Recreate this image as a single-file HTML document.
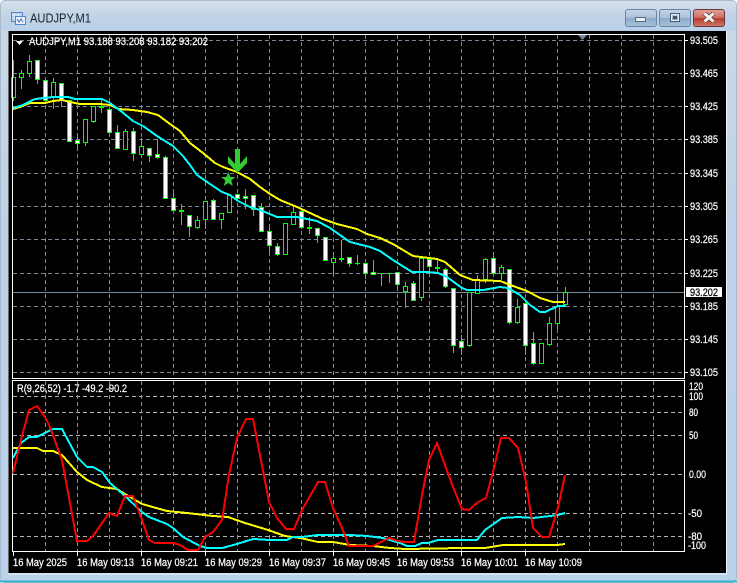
<!DOCTYPE html>
<html><head><meta charset="utf-8"><title>AUDJPY,M1</title>
<style>
html,body{margin:0;padding:0;background:#fff;overflow:hidden}
svg{display:block}
text{font-family:"Liberation Sans",sans-serif;font-size:11px;fill:#fff;stroke:#fff;stroke-width:.22px}
</style></head><body>
<svg width="737" height="583" viewBox="0 0 737 583" xmlns="http://www.w3.org/2000/svg">
<defs>
<linearGradient id="tb" x1="0" y1="0" x2="0" y2="1"><stop offset="0" stop-color="#d6e0ea"/><stop offset=".5" stop-color="#c2d3e5"/><stop offset="1" stop-color="#b9d1ea"/></linearGradient>
<linearGradient id="lf" x1="0" y1="0" x2="0" y2="1"><stop offset="0" stop-color="#ccd9e6"/><stop offset=".4" stop-color="#bcd2e8"/><stop offset="1" stop-color="#b9d1ea"/></linearGradient>
<linearGradient id="bt" x1="0" y1="0" x2="0" y2="1"><stop offset="0" stop-color="#c3d5e8"/><stop offset=".48" stop-color="#a9c1da"/><stop offset=".52" stop-color="#8caac8"/><stop offset="1" stop-color="#a8c4df"/></linearGradient>
<linearGradient id="cl" x1="0" y1="0" x2="0" y2="1"><stop offset="0" stop-color="#e0a198"/><stop offset=".48" stop-color="#cf6f62"/><stop offset=".52" stop-color="#b73a2b"/><stop offset="1" stop-color="#cf7a68"/></linearGradient>
</defs>
<rect width="737" height="583" fill="#fff"/>
<rect x="0" y="0" width="737" height="583" rx="5" fill="url(#lf)"/>
<rect x="0.5" y="0.5" width="736" height="582" rx="5" fill="none" stroke="#a9bccd"/>
<rect x="1" y="1" width="735" height="30" rx="4" fill="url(#tb)"/>
<path d="M0 581.500H737" stroke="#2fb4cc" stroke-width="2"/>

<!-- title icon -->
<g shape-rendering="crispEdges">
<rect x="11.500" y="12.500" width="11" height="9" fill="#bcd6f2" stroke="#4f86c6"/>
<rect x="15.500" y="16.500" width="10" height="8" fill="#e6f1fb" stroke="#4f86c6"/>
<path d="M13 15h2M17 15h2M14 18h1" stroke="#fff"/>
</g>
<path d="M17 19l2 3 2-3 2 3" fill="none" stroke="#3a6fb0"/>
<text x="30" y="22.500" textLength="61" lengthAdjust="spacingAndGlyphs" style="font-size:12.500px;fill:#16212e;stroke:none">AUDJPY,M1</text>

<!-- caption buttons -->
<rect x="625.500" y="9.500" width="31" height="17" rx="2.500" fill="url(#bt)" stroke="#6d84a0"/>
<rect x="659.500" y="9.500" width="31" height="17" rx="2.500" fill="url(#bt)" stroke="#6d84a0"/>
<rect x="693.500" y="9.500" width="31" height="17" rx="2.500" fill="url(#cl)" stroke="#6b3a40"/>
<rect x="635.500" y="17.500" width="10" height="4" fill="#e8eef5" stroke="#5a6b80" shape-rendering="crispEdges"/>
<rect x="670.500" y="13.500" width="9" height="8" fill="none" stroke="#4a5a70" shape-rendering="crispEdges"/>
<rect x="671.500" y="14.500" width="7" height="6" fill="none" stroke="#e8eef5" shape-rendering="crispEdges"/>
<rect x="673" y="16" width="4" height="3" fill="#3f4f63"/>
<path d="M704.500 13.500l9 8M713.500 13.500l-9 8" stroke="#5a2a28" stroke-width="4.400" fill="none"/>
<path d="M704.500 13.500l9 8M713.500 13.500l-9 8" stroke="#f4f2f0" stroke-width="3" fill="none"/>

<!-- client area -->
<rect x="8" y="31" width="718" height="542" fill="#000"/>
<path d="M8.500 31V573" stroke="#6a6a6a" shape-rendering="crispEdges"/>
<path d="M726.500 31V574H8" stroke="#f2f6fa" fill="none" shape-rendering="crispEdges"/>

<!-- main grid -->
<path shape-rendering="crispEdges" stroke="#778899" stroke-dasharray="4 3" fill="none" d="M13 40.500H684M13 73.500H684M13 106.500H684M13 139.500H684M13 173.500H684M13 206.500H684M13 239.500H684M13 273.500H684M13 306.500H684M13 339.500H684M13 372.500H684M45.500 35V378M77.500 35V378M109.500 35V378M141.500 35V378M173.500 35V378M205.500 35V378M237.500 35V378M269.500 35V378M301.500 35V378M333.500 35V378M365.500 35V378M397.500 35V378M429.500 35V378M461.500 35V378M493.500 35V378M525.500 35V378M557.500 35V378M589.500 35V378M621.500 35V378M653.500 35V378"/>
<path shape-rendering="crispEdges" stroke="#778899" fill="none" d="M13 292.500H684"/>

<!-- wicks -->
<path shape-rendering="crispEdges" stroke="#00ff00" fill="none" d="M13.500 60V101M21.500 70V89M29.500 55V77M37.500 60V84M45.500 80V100M53.500 78V109M61.500 83V107M69.500 100V141M77.500 134V151M85.500 119V146M93.500 106V123M101.500 100V113M109.500 105V133M117.500 125V148M125.500 129V150M133.500 128V161M141.500 138V157M149.500 148V162M157.500 139V159M165.500 156V198M173.500 193V211M181.500 204V225M189.500 215V237M197.500 216V229M205.500 201V229M213.500 199V219M221.500 213V229M229.500 195V213M245.500 189V209M253.500 195V216M261.500 203V232M269.500 227V252M277.500 243V256M293.500 206V225M301.500 209V229M309.500 217V234M317.500 228V243M325.500 237V260M333.500 256V276M341.500 240V262M349.500 257V267M357.500 255V265M365.500 263V279M373.500 260V274M381.500 273V286M389.500 273V283M397.500 272V291M405.500 282V308M413.500 281V301M421.500 258V301M429.500 258V272M437.500 260V273M445.500 268V288M453.500 288V353M461.500 335V355M469.500 292V347M477.500 275V293M485.500 258V283M493.500 256V274M501.500 265V280M509.500 269V324M517.500 299V324M525.500 303V355M533.500 332V365M549.500 317V346M557.500 298V330M565.500 287V307"/>
<!-- hollow bodies -->
<g shape-rendering="crispEdges" stroke="#00ff00" fill="#000">
<rect x="11.500" y="77.500" width="4" height="20"/><rect x="19.500" y="73.500" width="4" height="4"/><rect x="27.500" y="61.500" width="4" height="12"/><rect x="51.500" y="82.500" width="4" height="15"/><rect x="83.500" y="119.500" width="4" height="23"/><rect x="91.500" y="106.500" width="4" height="15"/><rect x="123.500" y="131.500" width="4" height="18"/><rect x="139.500" y="146.500" width="4" height="8"/><rect x="195.500" y="220.500" width="4" height="7"/><rect x="203.500" y="201.500" width="4" height="18"/><rect x="219.500" y="213.500" width="4" height="6"/><rect x="227.500" y="195.500" width="4" height="17"/><rect x="283.500" y="223.500" width="4" height="31"/><rect x="291.500" y="212.500" width="4" height="12"/><rect x="331.500" y="258.500" width="4" height="4"/><rect x="403.500" y="286.500" width="4" height="5"/><rect x="419.500" y="258.500" width="4" height="39"/><rect x="467.500" y="292.500" width="4" height="53"/><rect x="475.500" y="279.500" width="4" height="14"/><rect x="483.500" y="259.500" width="4" height="20"/><rect x="499.500" y="267.500" width="4" height="6"/><rect x="515.500" y="307.500" width="4" height="15"/><rect x="539.500" y="343.500" width="4" height="20"/><rect x="547.500" y="323.500" width="4" height="21"/><rect x="555.500" y="306.500" width="4" height="17"/><rect x="563.500" y="292.500" width="4" height="12"/>
</g>
<!-- white bodies -->
<g shape-rendering="crispEdges" stroke="#00ff00" fill="#fff">
<rect x="35.500" y="60.500" width="4" height="19"/><rect x="43.500" y="80.500" width="4" height="20"/><rect x="59.500" y="83.500" width="4" height="16"/><rect x="67.500" y="100.500" width="4" height="41"/><rect x="75.500" y="140.500" width="4" height="3"/><rect x="107.500" y="109.500" width="4" height="23"/><rect x="115.500" y="132.500" width="4" height="16"/><rect x="131.500" y="131.500" width="4" height="22"/><rect x="147.500" y="148.500" width="4" height="7"/><rect x="155.500" y="154.500" width="4" height="3"/><rect x="163.500" y="157.500" width="4" height="41"/><rect x="171.500" y="198.500" width="4" height="12"/><rect x="187.500" y="215.500" width="4" height="11"/><rect x="211.500" y="200.500" width="4" height="19"/><rect x="235.500" y="194.500" width="4" height="4"/><rect x="243.500" y="196.500" width="4" height="2"/><rect x="251.500" y="195.500" width="4" height="14"/><rect x="259.500" y="207.500" width="4" height="24"/><rect x="267.500" y="231.500" width="4" height="14"/><rect x="275.500" y="246.500" width="4" height="8"/><rect x="299.500" y="211.500" width="4" height="16"/><rect x="315.500" y="228.500" width="4" height="7"/><rect x="323.500" y="237.500" width="4" height="23"/><rect x="347.500" y="257.500" width="4" height="6"/><rect x="363.500" y="263.500" width="4" height="10"/><rect x="371.500" y="272.500" width="4" height="2"/><rect x="395.500" y="272.500" width="4" height="12"/><rect x="411.500" y="283.500" width="4" height="17"/><rect x="427.500" y="259.500" width="4" height="7"/><rect x="443.500" y="269.500" width="4" height="17"/><rect x="451.500" y="288.500" width="4" height="57"/><rect x="459.500" y="341.500" width="4" height="6"/><rect x="491.500" y="258.500" width="4" height="15"/><rect x="507.500" y="269.500" width="4" height="53"/><rect x="523.500" y="303.500" width="4" height="42"/><rect x="531.500" y="343.500" width="4" height="20"/>
</g>
<!-- doji -->
<g shape-rendering="crispEdges" fill="#00ff00">
<rect x="99" y="106" width="5" height="2"/><rect x="179" y="210" width="5" height="2"/><rect x="307" y="227" width="5" height="2"/><rect x="339" y="258" width="5" height="2"/><rect x="355" y="263" width="5" height="1"/><rect x="379" y="273" width="5" height="1"/><rect x="387" y="273" width="5" height="1"/><rect x="435" y="267" width="5" height="2"/>
</g>

<!-- moving averages -->
<polyline shape-rendering="crispEdges" fill="none" stroke="#ffff00" stroke-width="2" points="13,109 20,107 30,103 45,103 53,101 62,100 70,102 80,104 100,104 110,105 118,109 133,110 147,112 158,115 170,124 180,131 190,143 203,153 215,163 223,167 237,172 250,179 260,187 270,194 280,200 297,207 310,213 323,219 337,224 357,229 367,234 380,238 393,244 413,256 437,259 445,262 460,275 473,280 500,281 513,286 527,291 540,298 553,302 565,302"/>
<polyline shape-rendering="crispEdges" fill="none" stroke="#00ffff" stroke-width="2" points="13,108 23,105 35,99 53,97 68,97 75,99 102,99 110,103 122,112 133,121 143,126 157,136 173,146 183,156 190,165 197,175 210,184 222,192 230,195 238,201 250,207 260,210 277,217 297,217 317,221 330,228 350,242 370,247 380,251 393,260 412,272 427,272 438,273 447,277 462,288 467,290 483,290 500,287 508,288 520,295 530,305 540,312 545,312 558,306 565,306"/>

<!-- arrow + star -->
<path fill="#32cd32" d="M235 149h5v15l7-8v7l-9.500 10L228 163v-7l7 8z"/>
<path fill="#32cd32" d="M228.300 172l2 5h5l-4 3.500 1.500 5.500-4.500-3-4.500 3 1.500-5.500-4-3.500h5z"/>
<path fill="#778899" d="M578 35h9l-4.500 5z"/>

<!-- frames -->
<path shape-rendering="crispEdges" stroke="#fff" fill="none" d="M12.500 34.500H684.500V378.500H12.500Z"/>
<path shape-rendering="crispEdges" stroke="#fff" fill="none" d="M12.500 380.500H684.500V551.500H12.500Z"/>

<!-- sub grid -->
<path shape-rendering="crispEdges" stroke="#b4b4b4" stroke-dasharray="4 3" fill="none" d="M13 396.500H684M13 412.500H684M13 435.500H684M13 474.500H684M13 513.500H684M13 536.500H684"/>
<path shape-rendering="crispEdges" stroke="#8090a0" stroke-dasharray="4 3" fill="none" d="M45.500 381V551M77.500 381V551M109.500 381V551M141.500 381V551M173.500 381V551M205.500 381V551M237.500 381V551M269.500 381V551M301.500 381V551M333.500 381V551M365.500 381V551M397.500 381V551M429.500 381V551M461.500 381V551M493.500 381V551M525.500 381V551M557.500 381V551M589.500 381V551M621.500 381V551M653.500 381V551"/>

<!-- oscillator lines -->
<polyline fill="none" stroke="#ffff00" stroke-width="2" shape-rendering="crispEdges" points="13,448 37,448 43,451 53,451 62,455 77,472 87,480 102,487 117,489 125,494 142,504 167,511 187,513 213,516 228,517 245,523 268,530 285,536 300,538 318,542 333,542 350,545 373,546 390,548 405,549 463,548 485,548 503,545 557,545 565,544"/>
<polyline fill="none" stroke="#00ffff" stroke-width="2" shape-rendering="crispEdges" points="13,458 21,443 29,437 37,437 53,429 62,429 77,457 87,467 93,467 102,472 110,483 125,496 142,512 149,517 167,524 173,528 183,537 200,546 207,548 222,548 237,544 253,539 270,540 287,540 293,537 302,537 318,535 350,535 367,536 383,538 400,543 407,546 415,546 422,543 428,543 438,540 477,540 485,530 502,518 518,517 533,518 550,516 558,515 565,513"/>
<polyline fill="none" stroke="#ff0000" stroke-width="2" shape-rendering="crispEdges" points="13,473 21,440 29,410 37,406 45,417 50,427 62,460 77,541 87,541 93,536 109,513 117,516 125,496 133,496 142,520 149,540 155,543 173,543 180,545 188,550 198,550 205,537 213,532 222,520 229,475 237,438 246,419 253,419 269,502 277,518 286,529 294,529 302,510 318,482 325,482 333,508 342,528 349,546 357,546 373,546 389,538 398,541 405,542 414,542 422,495 429,460 437,443 453,487 462,509 469,510 478,502 486,498 493,472 501,438 509,438 518,448 526,482 533,528 542,537 549,537 558,508 565,475"/>

<!-- ticks -->
<path shape-rendering="crispEdges" stroke="#fff" fill="none" d="M685 40.500h3M685 73.500h3M685 106.500h3M685 139.500h3M685 173.500h3M685 206.500h3M685 239.500h3M685 273.500h3M685 306.500h3M685 339.500h3M685 372.500h3M13.500 552v4M77.500 552v4M141.500 552v4M205.500 552v4M269.500 552v4M333.500 552v4M397.500 552v4M461.500 552v4M525.500 552v4"/>

<!-- labels -->
<path fill="#fff" d="M16 41h7l-3.500 4z"/>
<text x="29" y="45" textLength="179" lengthAdjust="spacingAndGlyphs">AUDJPY,M1  93.188 93.208 93.182 93.202</text>
<text x="17" y="392" textLength="110" lengthAdjust="spacingAndGlyphs">R(9,26,52) -1.7 -49.2 -90.2</text>

<text x="690" y="44" textLength="28" lengthAdjust="spacingAndGlyphs">93.505</text>
<text x="690" y="77" textLength="28" lengthAdjust="spacingAndGlyphs">93.465</text>
<text x="690" y="110" textLength="28" lengthAdjust="spacingAndGlyphs">93.425</text>
<text x="690" y="143" textLength="28" lengthAdjust="spacingAndGlyphs">93.385</text>
<text x="690" y="177" textLength="28" lengthAdjust="spacingAndGlyphs">93.345</text>
<text x="690" y="210" textLength="28" lengthAdjust="spacingAndGlyphs">93.305</text>
<text x="690" y="243" textLength="28" lengthAdjust="spacingAndGlyphs">93.265</text>
<text x="690" y="277" textLength="28" lengthAdjust="spacingAndGlyphs">93.225</text>
<text x="690" y="310" textLength="28" lengthAdjust="spacingAndGlyphs">93.185</text>
<text x="690" y="343" textLength="28" lengthAdjust="spacingAndGlyphs">93.145</text>
<text x="690" y="376" textLength="28" lengthAdjust="spacingAndGlyphs">93.105</text>
<rect x="686" y="287" width="36" height="10" fill="#fff"/>
<text x="690" y="296" textLength="28" lengthAdjust="spacingAndGlyphs" style="fill:#000;stroke:#000">93.202</text>

<text x="689" y="390" textLength="14" lengthAdjust="spacingAndGlyphs">120</text>
<text x="689" y="400" textLength="14" lengthAdjust="spacingAndGlyphs">100</text>
<text x="689" y="416" textLength="9" lengthAdjust="spacingAndGlyphs">80</text>
<text x="689" y="439" textLength="9" lengthAdjust="spacingAndGlyphs">50</text>
<text x="689" y="478" textLength="17" lengthAdjust="spacingAndGlyphs">0.00</text>
<text x="688" y="517" textLength="14" lengthAdjust="spacingAndGlyphs">-50</text>
<text x="688" y="540" textLength="14" lengthAdjust="spacingAndGlyphs">-80</text>
<text x="688" y="549" textLength="18" lengthAdjust="spacingAndGlyphs">-100</text>

<text x="13" y="566" textLength="54" lengthAdjust="spacingAndGlyphs">16 May 2025</text>
<text x="77" y="566" textLength="57" lengthAdjust="spacingAndGlyphs">16 May 09:13</text>
<text x="141" y="566" textLength="57" lengthAdjust="spacingAndGlyphs">16 May 09:21</text>
<text x="205" y="566" textLength="57" lengthAdjust="spacingAndGlyphs">16 May 09:29</text>
<text x="269" y="566" textLength="57" lengthAdjust="spacingAndGlyphs">16 May 09:37</text>
<text x="333" y="566" textLength="57" lengthAdjust="spacingAndGlyphs">16 May 09:45</text>
<text x="397" y="566" textLength="57" lengthAdjust="spacingAndGlyphs">16 May 09:53</text>
<text x="461" y="566" textLength="57" lengthAdjust="spacingAndGlyphs">16 May 10:01</text>
<text x="525" y="566" textLength="57" lengthAdjust="spacingAndGlyphs">16 May 10:09</text>
</svg>
</body></html>
